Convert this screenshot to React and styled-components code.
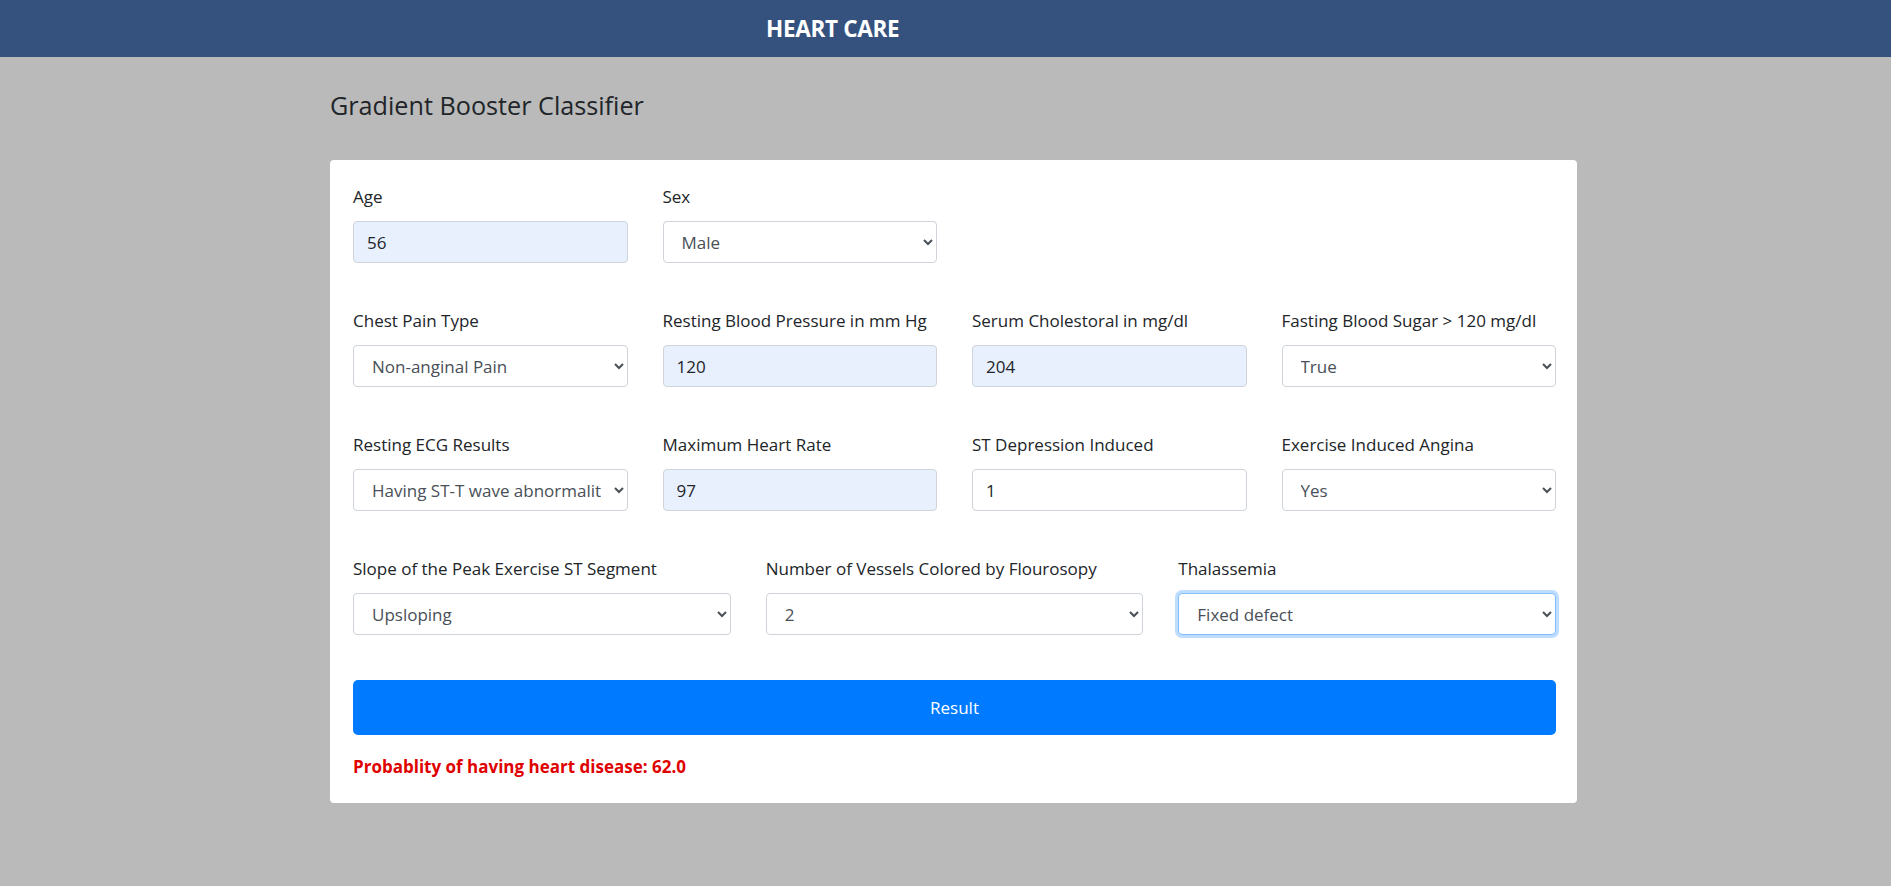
import styled, { createGlobalStyle } from "styled-components";

const GlobalStyle = createGlobalStyle`
  html, body {
    margin: 0;
    padding: 0;
    background-color: #bababa;
    font-family: "Open Sans", "Noto Sans", sans-serif;
    color: #212529;
  }
  * {
    box-sizing: border-box;
  }
`;

const rowOne = [
  { label: "Age", type: "input", value: "56", filled: true },
  { label: "Sex", type: "select", value: "Male", options: ["Male", "Female"] },
];

const rowTwo = [
  {
    label: "Chest Pain Type",
    type: "select",
    value: "Non-anginal Pain",
    options: ["Typical Angina", "Atypical Angina", "Non-anginal Pain", "Asymptomatic"],
  },
  { label: "Resting Blood Pressure in mm Hg", type: "input", value: "120", filled: true },
  { label: "Serum Cholestoral in mg/dl", type: "input", value: "204", filled: true },
  { label: "Fasting Blood Sugar > 120 mg/dl", type: "select", value: "True", options: ["True", "False"] },
];

const rowThree = [
  {
    label: "Resting ECG Results",
    type: "select",
    value: "Having ST-T wave abnormality",
    options: ["Normal", "Having ST-T wave abnormality", "Left ventricular hypertrophy"],
  },
  { label: "Maximum Heart Rate", type: "input", value: "97", filled: true },
  { label: "ST Depression Induced", type: "input", value: "1" },
  { label: "Exercise Induced Angina", type: "select", value: "Yes", options: ["Yes", "No"] },
];

const rowFour = [
  {
    label: "Slope of the Peak Exercise ST Segment",
    type: "select",
    value: "Upsloping",
    options: ["Upsloping", "Flat", "Downsloping"],
  },
  {
    label: "Number of Vessels Colored by Flourosopy",
    type: "select",
    value: "2",
    options: ["0", "1", "2", "3"],
  },
  {
    label: "Thalassemia",
    type: "select",
    value: "Fixed defect",
    options: ["Normal", "Fixed defect", "Reversable defect"],
    focused: true,
  },
];

const Field = ({ field }) => (
  <FormGroup>
    <Label>{field.label}</Label>
    {field.type === "input" ? (
      <TextInput type="text" defaultValue={field.value} $filled={field.filled} />
    ) : (
      <Select defaultValue={field.value} $focused={field.focused}>
        {field.options.map((option) => (
          <option key={option}>{option}</option>
        ))}
      </Select>
    )}
  </FormGroup>
);

const App = () => {
  return (
    <>
      <GlobalStyle />
      <Navbar>
        <Brand>HEART CARE</Brand>
      </Navbar>
      <Main>
        <Title>Gradient Booster Classifier</Title>
        <Card>
          <FieldGrid $cols={4}>
            {rowOne.map((field) => (
              <Field key={field.label} field={field} />
            ))}
          </FieldGrid>
          <FieldGrid $cols={4}>
            {rowTwo.map((field) => (
              <Field key={field.label} field={field} />
            ))}
          </FieldGrid>
          <FieldGrid $cols={4}>
            {rowThree.map((field) => (
              <Field key={field.label} field={field} />
            ))}
          </FieldGrid>
          <FieldGrid $cols={3}>
            {rowFour.map((field) => (
              <Field key={field.label} field={field} />
            ))}
          </FieldGrid>
          <ResultButton type="button">Result</ResultButton>
          <Probability>Probablity of having heart disease: 62.0</Probability>
        </Card>
      </Main>
    </>
  );
};

const Navbar = styled.header`
  display: flex;
  align-items: center;
  height: 57px;
  padding-left: 766px;
  background-color: #35527e;
`;

const Brand = styled.span`
  color: #fff;
  font-size: 22.5px;
  font-weight: 700;
  letter-spacing: -0.3px;
`;

const Main = styled.main`
  width: 1247px;
  margin-left: 330px;
  padding-top: 33px;
`;

const Title = styled.h4`
  margin: 0 0 39px;
  font-size: 25.2px;
  font-weight: 400;
  line-height: 31px;
  color: #212529;
`;

const Card = styled.div`
  background-color: #fff;
  border-radius: 4px;
  padding: 24px 21px 23px 23px;
`;

const FieldGrid = styled.div`
  display: grid;
  grid-template-columns: repeat(${(props) => props.$cols}, 1fr);
  column-gap: 35px;
  margin-bottom: 45px;
`;

const FormGroup = styled.div`
  display: flex;
  flex-direction: column;
`;

const Label = styled.label`
  font-size: 17px;
  line-height: 26px;
  margin-bottom: 11px;
  color: #212529;
  white-space: nowrap;
`;

const controlStyles = `
  width: 100%;
  height: 42px;
  padding: 0 13px;
  font-family: "Open Sans", "Noto Sans", sans-serif;
  font-size: 17px;
  color: #495057;
  border: 1px solid #ced4da;
  border-radius: 4px;
  outline: none;
`;

const TextInput = styled.input`
  ${controlStyles}
  color: #212529;
  background-color: ${(props) => (props.$filled ? "#e8f0fe" : "#fff")};
`;

const Select = styled.select`
  ${controlStyles}
  padding: 0 10px 0 14px;
  background-color: #fff;
  border-color: ${(props) => (props.$focused ? "#80bdff" : "#ced4da")};
  box-shadow: ${(props) => (props.$focused ? "0 0 0 3px rgba(0, 123, 255, 0.25)" : "none")};
`;

const ResultButton = styled.button`
  display: block;
  width: 100%;
  height: 55px;
  border: none;
  border-radius: 5px;
  background-color: #007bff;
  color: #fff;
  font-family: "Open Sans", "Noto Sans", sans-serif;
  font-size: 17px;
  cursor: pointer;
`;

const Probability = styled.p`
  margin: 19px 0 0;
  font-size: 17px;
  line-height: 26px;
  font-weight: 700;
  color: #e00000;
`;

export default App;
